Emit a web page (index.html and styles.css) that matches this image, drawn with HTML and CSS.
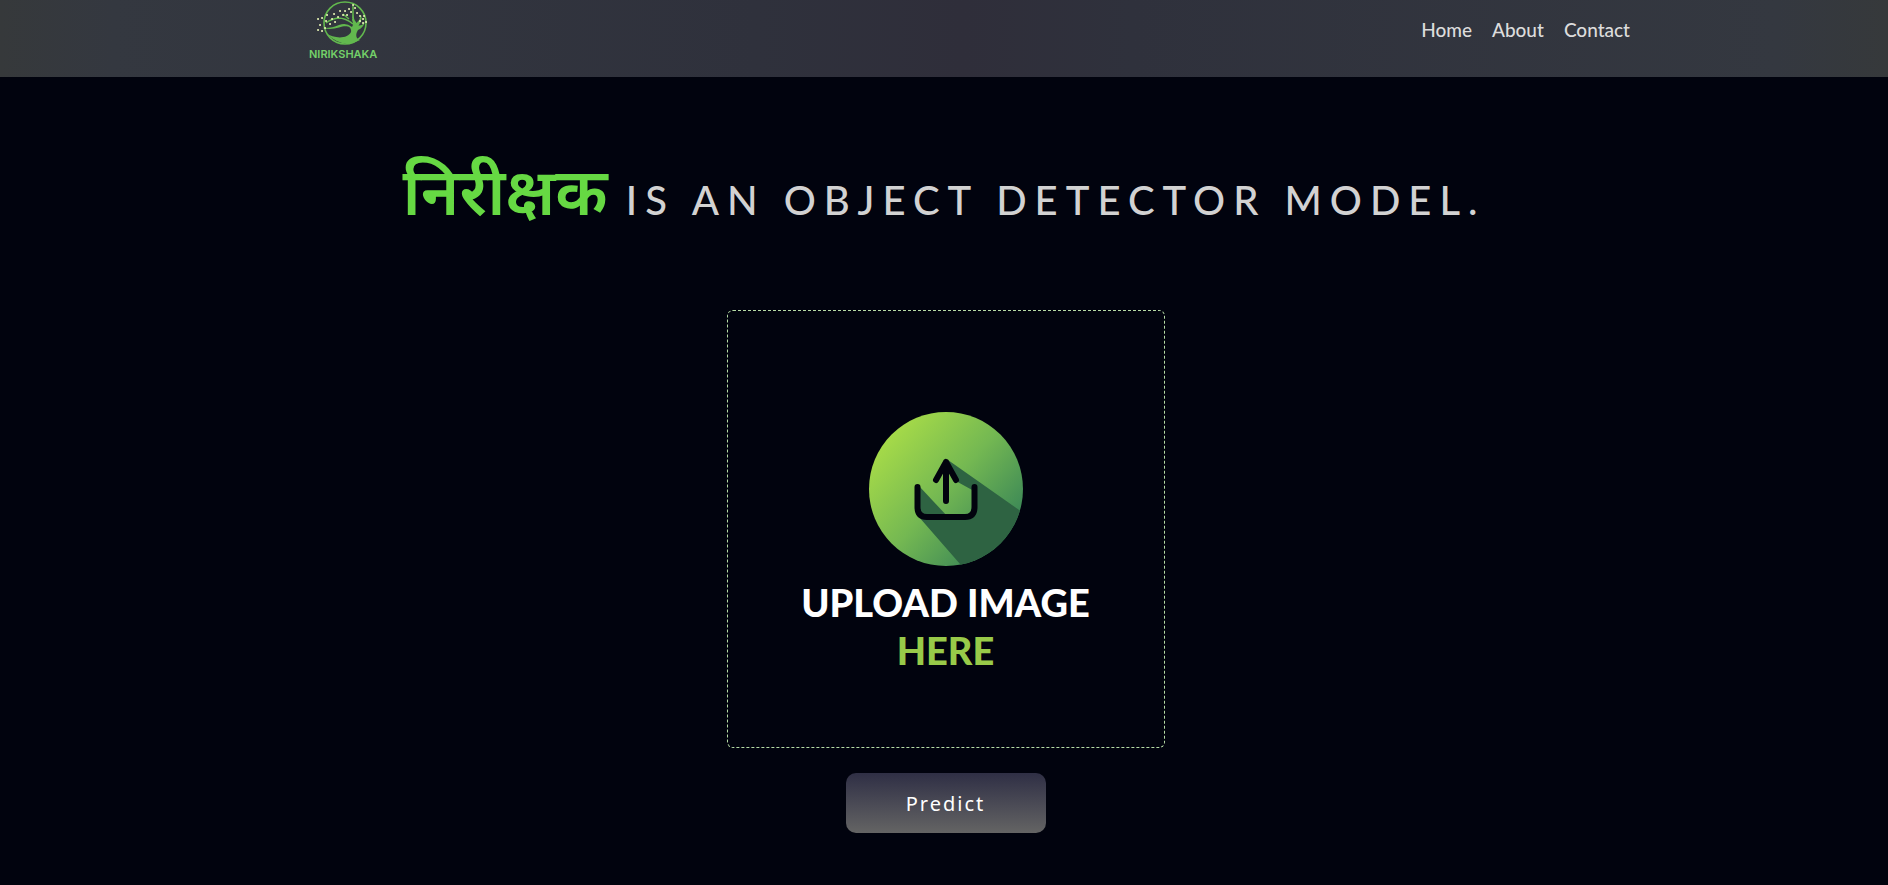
FILE: index.html
```html
<!DOCTYPE html>
<html lang="en">
<head>
<meta charset="utf-8">
<title>Nirikshaka</title>
<meta name="viewport" content="width=device-width, initial-scale=1">
<link rel="stylesheet" href="styles.css">
</head>
<body>
<header class="header">
  <a class="brand" href="#">
    <svg class="brand-mark" viewBox="0 0 56 46" aria-hidden="true">
      <circle cx="30" cy="23" r="21" fill="none" stroke="#62b84e" stroke-width="1.6"/>
      <path d="M11 33C19 39 33 39 36 32C37 26 31 25 24 27.500Q16 30 7 28Q17 28.500 24 25Q31 22 37 27Q39 24 37 20L38 14L39.500 20Q41 22 41.500 23Q45 20 46 15Q48 20 43.500 25.500Q47 26 50 22Q48 28 43 30C40 35 41 39 45 40Q28 50 11 33Z" fill="#62b84e"/>
      <path d="M38 24Q31 18 23 18Q16 19 11 23M34 19L28 14M38 18L38 6" fill="none" stroke="#62b84e" stroke-width="1.5"/>
      <path d="M3 19h.1M7 18h.1M5 25h.1M3 30h.1M7 31h.1M10 28h.1M12 15h.1M11 21h.1M17 19h.1M15 24h.1M19 14h.1M23 17h.1M25 11h.1M28 15h.1M20 22h.1M30 11h.1M34 9h.1M38 5h.1M36 12h.1M40 8h.1M42 13h.1M45 16h.1M48 19h.1M49 16h.1M48 23h.1M51 22h.1M45 21h.1M32 15h.1" stroke="#e3f0b2" stroke-width="2" stroke-linecap="round"/>
    </svg>
    <span class="brand-name">NIRIKSHAKA</span>
  </a>
  <nav class="nav">
    <a href="#">Home</a>
    <a href="#">About</a>
    <a href="#">Contact</a>
  </nav>
</header>
<main class="main">
  <h1 class="title"><span class="title-name" lang="hi">निरीक्षक</span> IS AN OBJECT DETECTOR MODEL.</h1>
  <form class="form">
    <label class="drop">
      <input class="drop-input" type="file" accept="image/*">
      <svg class="drop-icon" viewBox="0 0 154 154" aria-hidden="true">
        <defs>
          <linearGradient id="disc" x1="0.1" y1="0.15" x2="0.9" y2="0.85">
            <stop offset="0" stop-color="#a8dc48"/>
            <stop offset="0.5" stop-color="#74b852"/>
            <stop offset="1" stop-color="#358257"/>
          </linearGradient>
          <clipPath id="round"><circle cx="77" cy="77" r="77"/></clipPath>
        </defs>
        <circle cx="77" cy="77" r="77" fill="url(#disc)"/>
        <g clip-path="url(#round)" fill="#2e6342">
          <path d="M79 48L160 105V160H98L50 105H105V79L85 68Z"/>
          <path d="M50 74L79 105H53L48 100Z"/>
        </g>
        <path d="M77 89V50M67 68L77 50L87 68M48.500 75V95Q48.500 105 58 105H96Q105.500 105 105.500 95V75" fill="none" stroke="#02030e" stroke-width="6" stroke-linecap="round" stroke-linejoin="round"/>
      </svg>
      <span class="drop-text">UPLOAD IMAGE <span class="drop-accent">HERE</span></span>
    </label>
    <button class="predict" type="button">Predict</button>
  </form>
</main>
</body>
</html>
```
FILE: styles.css
```css
* {
  box-sizing: border-box;
}

body {
  margin: 0;
  min-height: 100vh;
  background: #01030e;
  color: #d2d2d2;
  font-family: Lato, "Noto Sans", sans-serif;
}

.header {
  display: flex;
  justify-content: space-between;
  align-items: flex-start;
  height: 77px;
  padding: 0 258px 0 309px;
  background: linear-gradient(90deg, #36393b, #343840 6%, #2f313c 40%, #2f2e3a 51%, #2f313c 60%, #343840 94%, #36393b);
}

.brand {
  display: flex;
  flex-direction: column;
  align-items: center;
  text-decoration: none;
}

.brand-mark {
  width: 56px;
  height: 46px;
}

.brand-name {
  color: #74d069;
  font: 600 11px/16px Inter, sans-serif;
}

.nav {
  display: flex;
  gap: 20px;
  padding-top: 18px;
}

.nav a {
  color: #dcdcdc;
  font-size: 19px;
  font-weight: 500;
  line-height: 24px;
  text-decoration: none;
}

.title {
  margin: 0;
  padding-top: 57px;
  font-size: 40px;
  font-weight: 500;
  line-height: 112px;
  letter-spacing: 8px;
  text-align: center;
}

.title-name {
  color: #66d943;
  font-size: 65px;
  font-weight: 600;
  letter-spacing: 0;
}

.form {
  display: flex;
  flex-direction: column;
  align-items: center;
  gap: 25px;
  padding: 54px 0 52px 3px;
}

.drop {
  display: flex;
  flex-direction: column;
  align-items: center;
  width: 438px;
  height: 438px;
  padding-top: 101px;
  border: 1px dashed #b5dba5;
  border-radius: 6px;
  cursor: pointer;
}

.drop-input {
  position: absolute;
  opacity: 0;
  pointer-events: none;
}

.drop-icon {
  width: 154px;
  height: 154px;
}

.drop-text {
  padding-top: 12px;
  color: #fff;
  font-size: 38px;
  font-weight: 900;
  line-height: 48px;
  text-align: center;
}

.drop-accent {
  display: block;
  color: #98ca49;
}

.predict {
  width: 200px;
  height: 60px;
  border: 0;
  border-radius: 10px;
  background: linear-gradient(#2f2f45, #646464);
  color: #fff;
  font: 20px "Noto Sans", sans-serif;
  letter-spacing: 2px;
}
```
